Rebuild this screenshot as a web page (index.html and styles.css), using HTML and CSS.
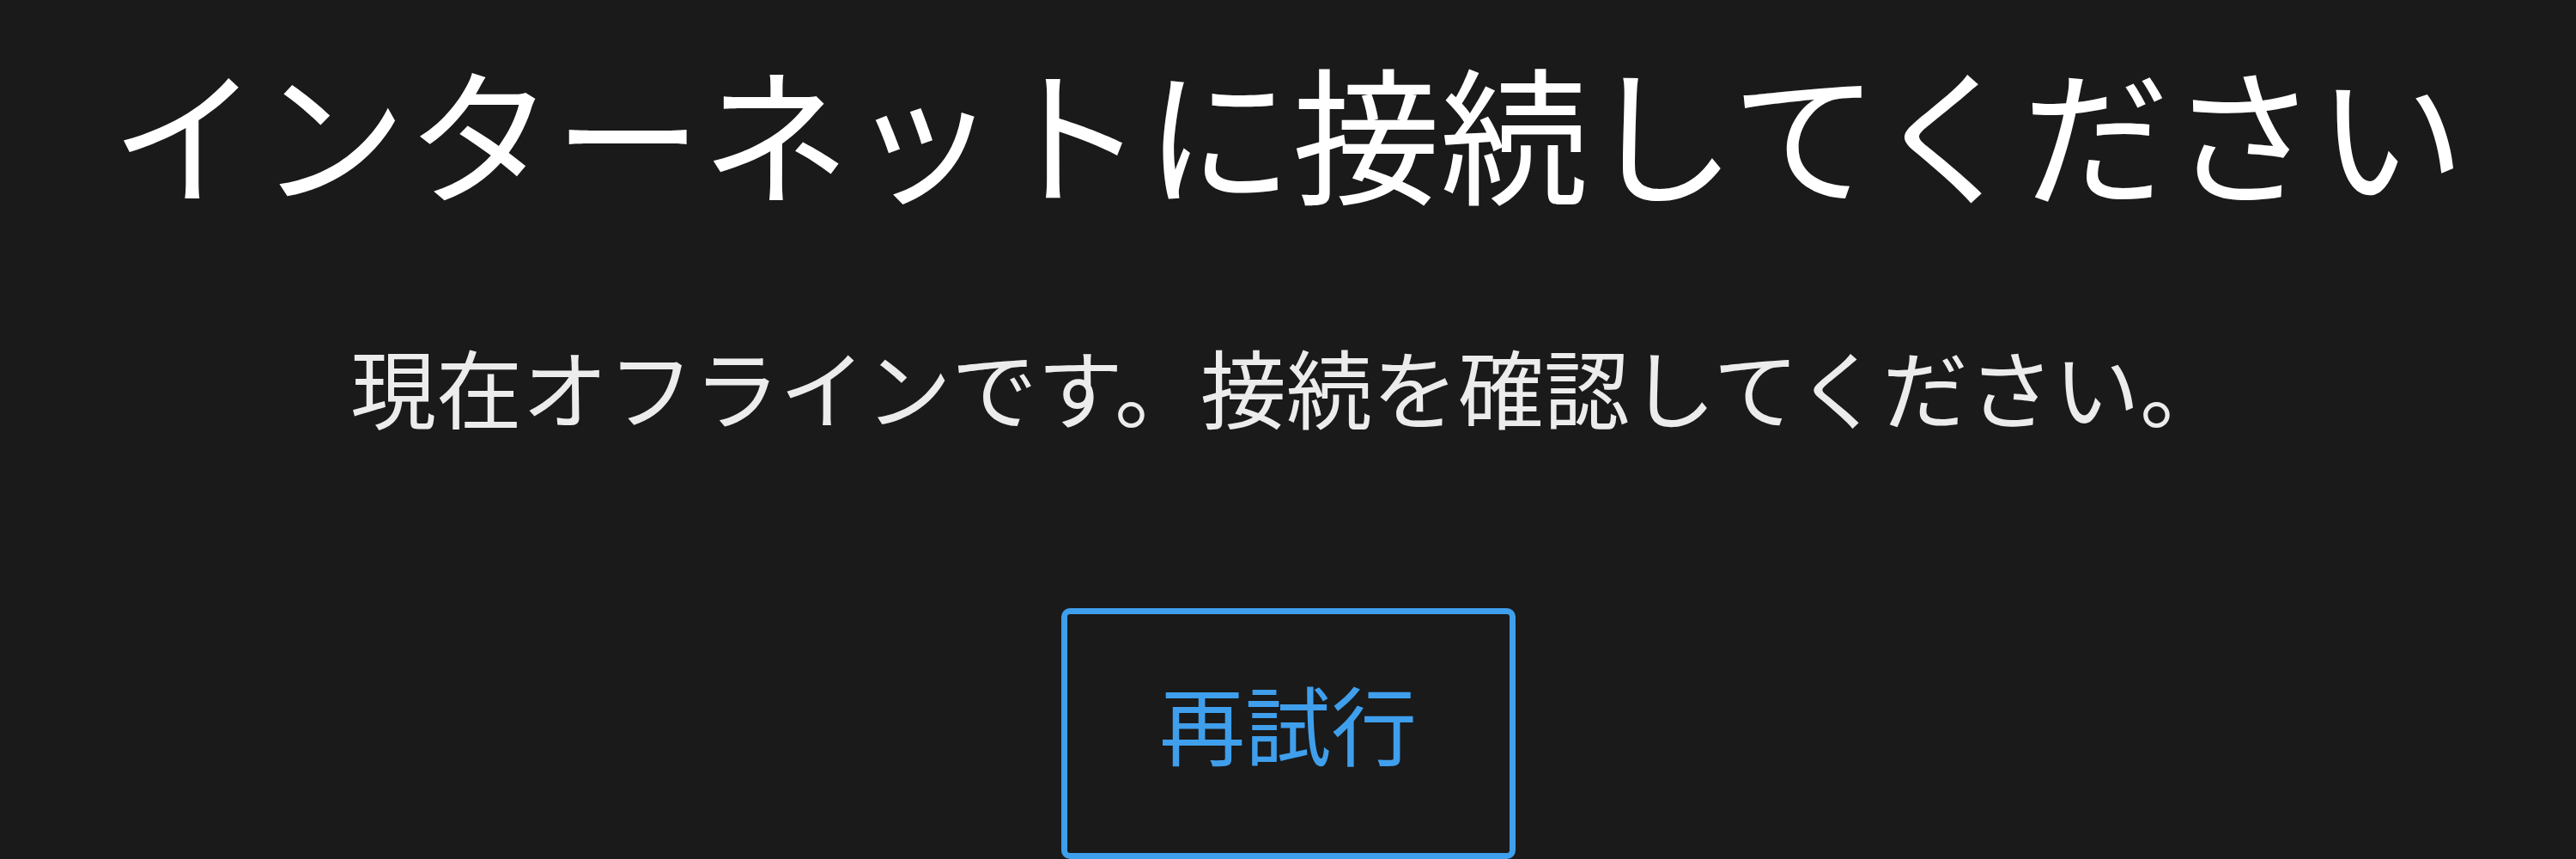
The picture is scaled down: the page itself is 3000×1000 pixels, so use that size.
FILE: index.html
```html
<!DOCTYPE html>
<html lang="ja">
<head>
<meta charset="utf-8">
<title>オフライン</title>
<link rel="stylesheet" href="styles.css">
</head>
<body>
<main class="offline">
  <h1 class="offline-title">インターネットに接続してください</h1>
  <p class="offline-message">現在オフラインです。接続を確認してください。</p>
  <button class="retry-button" type="button">再試行</button>
</main>
</body>
</html>
```
FILE: styles.css
```css
html, body {
  margin: 0;
  padding: 0;
  background: #1a1a1a;
}

body {
  font-family: "Noto Sans CJK JP", "Noto Sans", sans-serif;
  min-height: 1000px;
  overflow: hidden;
}

.offline {
  display: flex;
  flex-direction: column;
  align-items: center;
  padding-top: 64px;
}

.offline-title {
  margin: 0;
  font-size: 172px;
  line-height: 172px;
  font-weight: 400;
  color: #ffffff;
  white-space: nowrap;
}

.offline-message {
  margin: 163px 0 0;
  font-size: 100px;
  line-height: 100px;
  font-weight: 400;
  color: #ececec;
  white-space: nowrap;
}

.retry-button {
  margin-top: 209px;
  box-sizing: border-box;
  width: 529px;
  height: 292px;
  padding: 76px 0 102px;
  border: 7px solid #3f9fec;
  border-radius: 10px;
  background: transparent;
  color: #3f9fec;
  font-family: "Noto Sans CJK JP", "Noto Sans", sans-serif;
  font-size: 100px;
  line-height: 100px;
  font-weight: 400;
  display: flex;
  justify-content: center;
  align-items: flex-start;
}
```
